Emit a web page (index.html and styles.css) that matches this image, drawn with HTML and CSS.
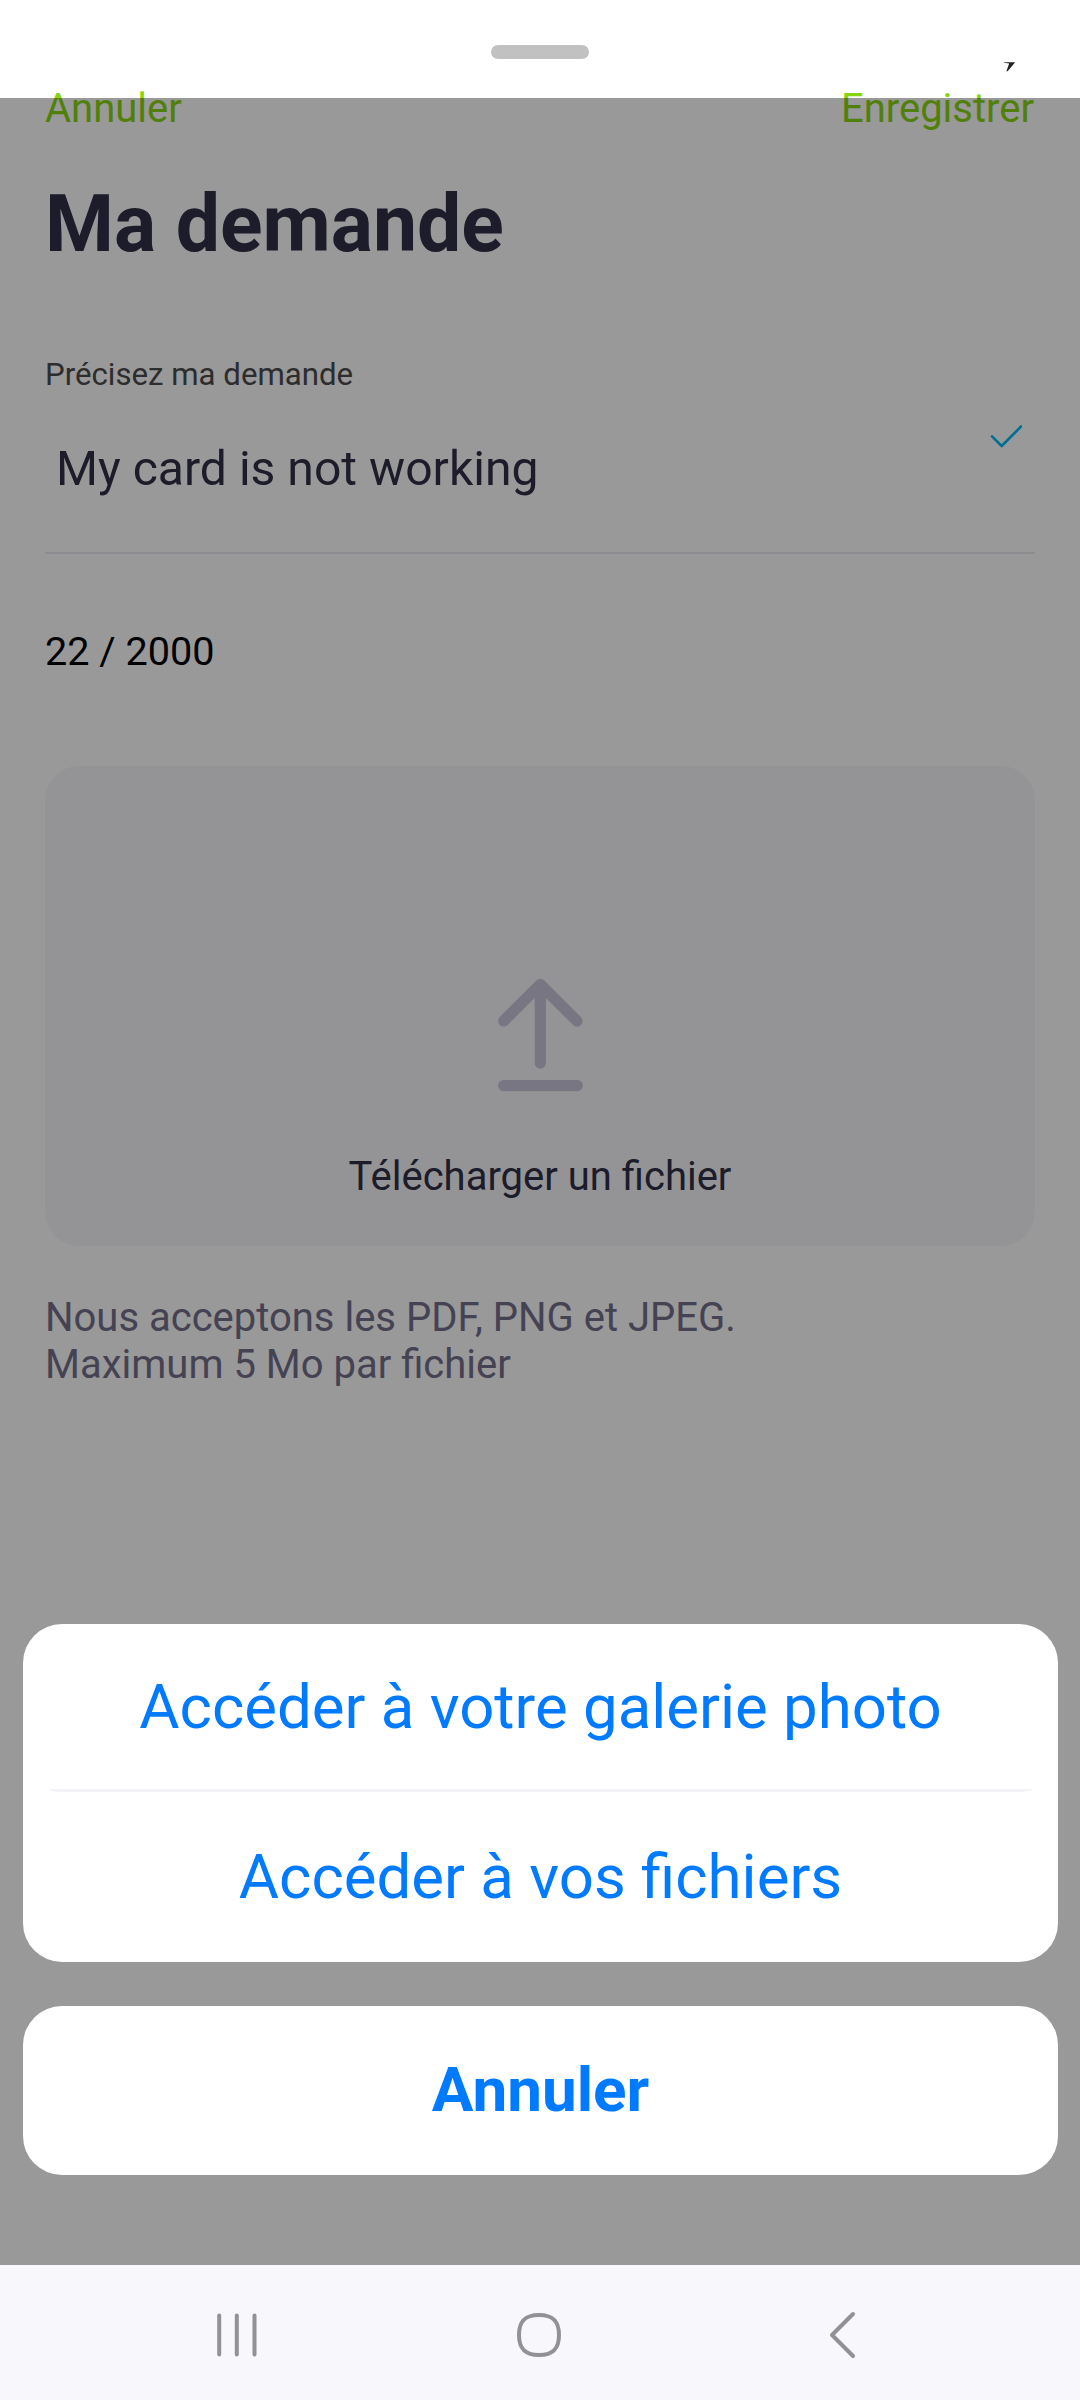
FILE: index.html
```html
<!DOCTYPE html>
<html lang="fr">
<head>
<meta charset="utf-8">
<title>Ma demande</title>
<link rel="stylesheet" href="styles.css">
</head>
<body>
<div class="screen">
  <main class="page">
    <div class="grabber-row">
      <span class="grabber"></span>
      <svg class="status-mark" width="12" height="10" viewBox="0 0 12 10"><path d="M0 .2H11.200L3.600 9.200H2.400L5.200 1.400L0 .8Z" fill="#222"/></svg>
    </div>
    <header class="actions"><span>Annuler</span><span>Enregistrer</span></header>
    <h1 class="title">Ma demande</h1>
    <div class="label">Précisez ma demande</div>
    <div class="field">
      <span class="value">My card is not working</span>
      <svg class="check" width="34" height="26" viewBox="0 0 34 26"><path d="M4 13.300L13.700 23L33 3.500" fill="none" stroke="#00b9f9" stroke-width="2.600" stroke-linecap="round" stroke-linejoin="round"/></svg>
    </div>
    <div class="counter">22 / 2000</div>
    <section class="upload">
      <svg width="90" height="118" viewBox="495 976 90 118"><path d="M503.700 1021L540.300 984.400L577 1021M540.300 984.400V1063M503.700 1085.600H577.200" fill="none" stroke="#c8c5da" stroke-width="11.250" stroke-linecap="round" stroke-linejoin="round"/></svg>
      <span class="upload-text">Télécharger un fichier</span>
    </section>
    <p class="hint">Nous acceptons les PDF, PNG et JPEG.<br>Maximum 5 Mo par fichier</p>
  </main>
  <div class="scrim">
    <div class="sheet">
      <div class="option first">Accéder à votre galerie photo</div>
      <div class="option">Accéder à vos fichiers</div>
    </div>
    <div class="sheet cancel"><div class="option">Annuler</div></div>
  </div>
  <nav class="navbar">
    <svg width="46" height="50" viewBox="214 2310 46 50"><path d="M219.200 2315.500V2354.500M236.800 2315.500V2354.500M254.500 2315.500V2354.500" stroke="#929294" stroke-width="4" stroke-linecap="round"/></svg>
    <svg width="50" height="50" viewBox="514 2310 50 50"><path d="M539 2315C553 2315 559 2321 559 2335S553 2355 539 2355S519 2349 519 2335S525 2315 539 2315Z" fill="none" stroke="#929294" stroke-width="4"/></svg>
    <svg width="34" height="50" viewBox="825 2310 34 50"><path d="M853 2314L832 2335L853 2356" fill="none" stroke="#929294" stroke-width="4" stroke-linecap="round" stroke-linejoin="round"/></svg>
  </nav>
</div>
</body>
</html>
```
FILE: styles.css
```css
* { box-sizing: border-box; }
body { margin: 0; background: #fff; font-family: Roboto, "Liberation Sans", sans-serif; }
.screen { position: relative; width: 1080px; height: 2400px; display: flex; flex-direction: column; overflow: hidden; }
.page { height: 2265px; padding: 0 45px; }
.grabber-row { height: 86px; padding-top: 45px; display: flex; justify-content: center; position: relative; }
.grabber { width: 98px; height: 14px; border-radius: 7px; background: #c1c1c1; }
.status-mark { position: absolute; left: 959px; top: 62px; }
.actions { display: flex; justify-content: space-between; padding-right: 1px; height: 46px; line-height: 46px; font-size: 40px; color: #88d50f; }
.title { margin: 46px 0 0; height: 92px; line-height: 92px; font-size: 78.75px; font-weight: 700; color: #302f46; }
.label { margin-top: 87px; height: 36px; line-height: 36px; font-size: 31.2px; color: #4b4b4b; }
.field { display: flex; justify-content: space-between; margin-top: 29px; height: 132px; padding: 0 13px 0 11px; border-bottom: 2px solid #ebebf2; }
.value { padding-top: 19px; line-height: 56px; font-size: 48.1px; color: #302f46; }
.check { margin-top: 1px; }
.counter { margin-top: 75px; height: 46px; line-height: 46px; font-size: 39.6px; color: #000; }
.upload { margin-top: 91px; height: 480px; padding-top: 210px; border-radius: 34px; background: #f7f7fb; display: flex; flex-direction: column; align-items: center; }
.upload-text { margin-top: 60px; line-height: 46px; font-size: 40px; color: #302f46; }
.hint { margin: 48px 0 0; line-height: 47px; font-size: 40px; color: #736f8a; }
.scrim { position: absolute; top: 98px; left: 0; right: 0; height: 2167px; padding: 0 22px 90px 23px; background: rgba(0, 0, 0, .4); display: flex; flex-direction: column; justify-content: flex-end; gap: 44px; }
.sheet { border-radius: 39px; background: #fff; color: #007aff; font-size: 61.75px; }
.option { height: 169px; display: flex; align-items: center; justify-content: center; line-height: 73px; }
.first { position: relative; padding-bottom: 3px; }
.first::after { content: ""; position: absolute; left: 26px; right: 26px; bottom: 1px; height: 3px; background: #f2f2f8; border-radius: 0 0 12px 12px / 0 0 3px 3px; }
.cancel { font-size: 62px; font-weight: 700; }
.cancel .option { padding-bottom: 2px; }
.navbar { position: relative; height: 135px; padding: 45px 221px 0 214px; background: #f7f7fc; display: grid; grid-template-columns: 300px 311px 34px; }
```
